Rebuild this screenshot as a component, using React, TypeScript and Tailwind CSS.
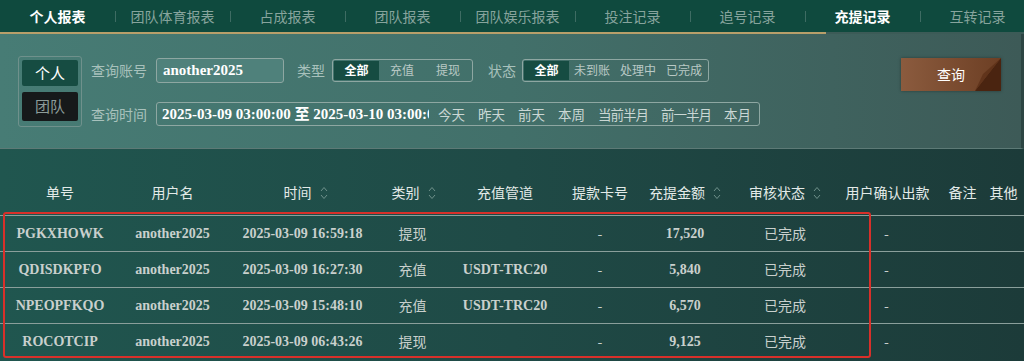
import React from 'react';

const CN = "font-['Noto_Sans_CJK_SC','Noto_Sans',sans-serif]";
const SERIF = "font-['Liberation_Serif','DejaVu_Serif',serif]";

const tabs = ['个人报表', '团队体育报表', '占成报表', '团队报表', '团队娱乐报表', '投注记录', '追号记录', '充提记录', '互转记录'];
const activeTabs = ['个人报表', '充提记录'];
const quick = ['今天', '昨天', '前天', '本周', '当前半月', '前一半月', '本月'];

const cols = 'grid grid-cols-[120px_105px_155px_65px_120px_70px_100px_100px_105px_45px_37px]';

const rows = [
  { id: 'PGKXHOWK', user: 'another2025', time: '2025-03-09 16:59:18', kind: '提现', channel: '', amount: '17,520' },
  { id: 'QDISDKPFO', user: 'another2025', time: '2025-03-09 16:27:30', kind: '充值', channel: 'USDT-TRC20', amount: '5,840' },
  { id: 'NPEOPFKQO', user: 'another2025', time: '2025-03-09 15:48:10', kind: '充值', channel: 'USDT-TRC20', amount: '6,570' },
  { id: 'ROCOTCIP', user: 'another2025', time: '2025-03-09 06:43:26', kind: '提现', channel: '', amount: '9,125' },
];

function SortIcon() {
  return (
    <svg width="8" height="16" viewBox="0 0 8 16" className="ml-2 shrink-0">
      <polyline points="1,6 4,2.5 7,6" fill="none" stroke="#6f918b" strokeWidth="1" />
      <polyline points="1,10 4,13.5 7,10" fill="none" stroke="#6f918b" strokeWidth="1" />
    </svg>
  );
}

function Segment({ items }: { items: string[] }) {
  return (
    <div className="flex h-[23px] items-stretch rounded-[3px] border border-[#8ea7a2] p-px">
      {items.map((t, i) => (
        <div
          key={t}
          className={`flex items-center justify-center text-[12px] ${i === 0 ? 'w-[45px] bg-[#164c42] text-white font-semibold' : 'w-[46px] text-[#b9c9c5]'}`}
        >
          {t}
        </div>
      ))}
    </div>
  );
}

export default function App() {
  return (
    <div className={`w-[1024px] h-[361px] overflow-hidden bg-[#1f4a46] ${CN}`}>
      {/* Tabs */}
      <nav className="relative h-[34px] bg-[#0f4a3e]">
        <div className="flex h-[32px] items-center">
          {tabs.map((t, i) => (
            <div key={t} className="relative flex w-[115px] shrink-0 items-center justify-center">
              {i > 0 && <span className="absolute left-0 h-[11px] w-px bg-[#3e6c63]" />}
              <span
                className={`text-[14px] ${activeTabs.includes(t) ? 'font-bold text-white' : 'text-[#87a49d]'}`}
              >
                {t}
              </span>
            </div>
          ))}
        </div>
        <div className="flex h-[2px]">
          <div className="w-[826px] bg-[#b89f6a]" />
          <div className="flex-1 bg-[#3c5b57]" />
        </div>
      </nav>

      {/* Filters */}
      <section className="flex h-[115px] border-b border-[#5d7a76] border-r-[3px] border-r-[#2c4543] bg-gradient-to-r from-[#477c75] via-[#42706a] to-[#3d5a57] pl-[18px] pt-[22px]">
        <div className="flex h-[71px] w-[64px] flex-col gap-[6px] rounded-[3px] border border-[#6f918c] p-[3px]">
          <div className="flex h-[26px] items-center justify-center rounded-[2px] bg-[#164c42] text-[15px] text-white">个人</div>
          <div className="flex h-[29px] items-center justify-center rounded-[2px] bg-[#16191a] text-[15px] text-[#8c9c99]">团队</div>
        </div>

        <div className="ml-[9px] flex flex-1 flex-col">
          <div className="flex h-[26px] items-center pt-[2px]">
            <span className="w-[65px] text-[14px] text-[#a8c1bc]">查询账号</span>
            <div className={`flex h-[25px] w-[128px] items-center rounded-[3px] border border-[#8ea7a2] bg-[#4f817b] px-[6px] text-[15px] font-bold text-white ${SERIF}`}>
              another2025
            </div>
            <span className="ml-[13px] mr-[7px] text-[14px] text-[#a8c1bc]">类型</span>
            <Segment items={['全部', '充值', '提现']} />
            <span className="ml-[15px] mr-[6px] text-[14px] text-[#a8c1bc]">状态</span>
            <Segment items={['全部', '未到账', '处理中', '已完成']} />
            <button className="relative ml-auto mr-[20px] mt-[8px] h-[33px] w-[100px] overflow-hidden bg-gradient-to-r from-[#8b5b3e] to-[#6d3f24] text-[14px] text-white shadow-[0_0_3px_rgba(0,0,0,0.35)]">
              <svg className="absolute right-0 top-0" width="40" height="33" viewBox="0 0 40 33">
                <polygon points="40,0 40,33 14,33" fill="#4a2410" />
                <polygon points="40,0 14,33 22,16" fill="#5a2e16" opacity="0.7" />
              </svg>
              <span className="relative">查询</span>
            </button>
          </div>

          <div className="mt-[20px] flex h-[24px] items-center">
            <span className="w-[65px] text-[14px] text-[#a8c1bc]">查询时间</span>
            <div className="flex h-[24px] w-[604px] items-center rounded-[3px] border border-[#8ea7a2]">
              <div className={`w-[272px] shrink-0 overflow-hidden whitespace-nowrap pl-[5px] text-[15px] font-bold text-white ${SERIF}`}>
                2025-03-09 03:00:00 <span className={CN}>至</span> 2025-03-10 03:00:00
              </div>
              <div className="flex items-center gap-[13px] whitespace-nowrap pl-[9px] text-[13.5px] text-[#cad7d4]">
                {quick.map((q) => (
                  <span key={q} className={q.length > 2 ? 'tracking-[-1px]' : ''}>{q}</span>
                ))}
              </div>
            </div>
          </div>
        </div>
      </section>

      {/* Table */}
      <section className="relative h-[212px] bg-gradient-to-r from-[#20564f] via-[#1f4a46] to-[#1c3b39]">
        <div className={`${cols} h-[66px] items-end pb-[12px] text-[14px] text-[#e3eae8]`}>
          <div className="text-center">单号</div>
          <div className="text-center">用户名</div>
          <div className="flex items-center justify-center pl-[6px]">时间<SortIcon /></div>
          <div className="flex items-center justify-center pl-[2px]">类别<SortIcon /></div>
          <div className="text-center">充值管道</div>
          <div className="text-center">提款卡号</div>
          <div className="flex items-center justify-center">充提金额<SortIcon /></div>
          <div className="flex items-center justify-center">审核状态<SortIcon /></div>
          <div className="text-center">用户确认出款</div>
          <div className="text-center">备注</div>
          <div className="text-center">其他</div>
        </div>

        {rows.map((r) => (
          <div key={r.id} className={`${cols} h-[36px] items-center border-t border-[#8a9f9b] text-[14px] text-[#c9d0cd]`}>
            <div className={`text-center font-bold ${SERIF}`}>{r.id}</div>
            <div className={`text-center font-bold ${SERIF}`}>{r.user}</div>
            <div className={`text-center font-bold ${SERIF}`}>{r.time}</div>
            <div className="text-center">{r.kind}</div>
            <div className={`text-center font-bold ${SERIF}`}>{r.channel}</div>
            <div className="text-center">-</div>
            <div className={`text-center font-bold ${SERIF}`}>{r.amount}</div>
            <div className="text-center">已完成</div>
            <div className="pr-[2px] text-center">-</div>
            <div />
            <div />
          </div>
        ))}

        {/* highlight box */}
        <div className="pointer-events-none absolute left-[3px] top-[63px] h-[146px] w-[868px] rounded-[3px] border-[2px] border-[#d8302a]" />
      </section>
    </div>
  );
}
